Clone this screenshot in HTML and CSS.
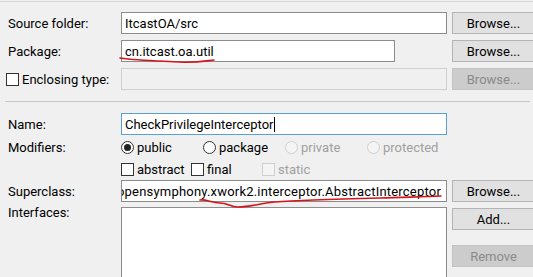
FILE: index.html
```html
<!DOCTYPE html>
<html lang="en">
<head>
    <meta charset="UTF-8">
    <meta name="viewport" content="width=device-width, initial-scale=1.0">
    <title>New Java Class</title>
    <link rel="stylesheet" href="styles.css">
</head>
<body>
    <div class="top-line"></div>
    <div class="form-grid top-section">
        <div class="label">Source folder:</div>
        <div class="field">ItcastOA/src</div>
        <div class="button">Browse...</div>

        <div class="label">Package:</div>
        <div class="field field-short">cn.itcast.oa.util</div>
        <div class="button">Browse...</div>

        <div class="label check-label"><span class="box"></span>Enclosing type:</div>
        <div class="field field-disabled"></div>
        <div class="button button-disabled">Browse...</div>
    </div>

    <div class="separator"></div>

    <div class="form-grid bottom-section">
        <div class="label">Name:</div>
        <div class="field field-focus">CheckPrivilegeInterceptor<span class="caret"></span></div>
        <div></div>

        <div class="label">Modifiers:</div>
        <div class="radio-row">
            <span class="option"><span class="radio radio-on"></span>public</span>
            <span class="option"><span class="radio"></span>package</span>
            <span class="option option-disabled"><span class="radio"></span>private</span>
            <span class="option option-disabled"><span class="radio"></span>protected</span>
        </div>
        <div></div>

        <div class="label"></div>
        <div class="check-row">
            <span class="option"><span class="box"></span>abstract</span>
            <span class="option"><span class="box"></span>final</span>
            <span class="option option-disabled"><span class="box"></span>static</span>
        </div>
        <div></div>

        <div class="label">Superclass:</div>
        <div class="field field-scrolled"><span>com.opensymphony.xwork2.interceptor.AbstractInterceptor</span></div>
        <div class="button">Browse...</div>

        <div class="label label-top">Interfaces:</div>
        <div class="list-box"></div>
        <div class="button-stack">
            <div class="button">Add...</div>
            <div class="button button-disabled">Remove</div>
        </div>
    </div>

    <!-- hand drawn red marks on the screenshot -->
    <svg class="marks" viewBox="0 0 533 277" width="533" height="277">
        <path d="M120 58 C140 61 165 61 180 62 C195 63 205 61 214 60" />
        <path d="M200 200 C206 199 212 203 220 203 C228 203 230 207 238 207 C250 207 262 203 275 202 C300 200 340 199 380 198 C405 197 425 197 441 196" />
    </svg>
</body>
</html>
```

FILE: styles.css
```css
body {
    margin: 0;
    width: 533px;
    height: 277px;
    overflow: hidden;
    position: relative;
    background-color: #f0f0f0;
    font-family: Roboto, "Noto Sans", sans-serif;
    font-size: 13px;
    color: #000;
}
.top-line {
    margin-top: 1px;
    border-top: 1px solid #d8d8d8;
}
.form-grid {
    display: grid;
    grid-template-columns: 110px 326px 83px;
    column-gap: 5px;
    padding-left: 6px;
}
.top-section {
    padding-top: 10px;
    grid-template-rows: 22px 22px 22px;
    row-gap: 6px;
}
.separator {
    margin: 11px 3px 0 5px;
    border-top: 1px solid #c8c8c8;
}
.bottom-section {
    padding-top: 11px;
    grid-template-rows: 22px 22px 20px 22px 85px;
    row-gap: 1px;
}
.label {
    display: flex;
    align-items: center;
    padding-left: 2px;
    white-space: nowrap;
}
.label-top {
    align-items: flex-start;
    padding-top: 2px;
}
.check-label {
    padding-left: 0;
}
.field {
    display: flex;
    align-items: center;
    background-color: #fff;
    border: 1px solid #8c8c8c;
    padding: 0 3px;
    white-space: nowrap;
    overflow: hidden;
}
.field-short {
    width: 266px;
}
.field-disabled {
    background-color: #f0f0f0;
    border-color: #d0d0d0;
}
.field-focus {
    border-color: #5a9fd8;
}
.field-scrolled {
    justify-content: flex-end;
    padding-right: 5px;
    letter-spacing: 0.2px;
}
.caret {
    display: inline-block;
    width: 1px;
    height: 15px;
    background-color: #000;
    margin-left: 1px;
}
.button {
    display: flex;
    align-items: center;
    justify-content: center;
    height: 22px;
    box-sizing: border-box;
    background-color: #e1e1e1;
    border: 1px solid #b4b4b4;
}
.button-disabled {
    background-color: #cccccc;
    border-color: #c4c4c4;
    color: #8a8a8a;
}
.button-stack {
    display: flex;
    flex-direction: column;
    gap: 15px;
    padding-top: 5px;
}
.list-box {
    margin-top: 4px;
    background-color: #fff;
    border: 1px solid #8c8c8c;
    height: 80px;
}
.radio-row {
    display: grid;
    grid-template-columns: 82px 82px 82px 80px;
    align-items: center;
}
.check-row {
    display: grid;
    grid-template-columns: 70px 71px 70px;
    align-items: center;
}
.option {
    display: flex;
    align-items: center;
    gap: 3px;
    white-space: nowrap;
}
.option-disabled {
    color: #a0a0a0;
}
.radio {
    width: 11px;
    height: 11px;
    border: 1px solid #333;
    border-radius: 50%;
    background-color: #fff;
    position: relative;
}
.radio-on::after {
    content: "";
    position: absolute;
    left: 2px;
    top: 2px;
    width: 7px;
    height: 7px;
    border-radius: 50%;
    background-color: #222;
}
.box {
    display: inline-block;
    width: 11px;
    height: 11px;
    border: 1px solid #333;
    background-color: #fff;
    margin-right: 3px;
}
.option .box {
    margin-right: 0;
}
.option-disabled .radio,
.option-disabled .box {
    border-color: #cfcfcf;
    background-color: #f4f4f4;
}
.marks {
    position: absolute;
    left: 0;
    top: 0;
    pointer-events: none;
}
.marks path {
    fill: none;
    stroke: #d8141a;
    stroke-width: 1.6;
    stroke-linecap: round;
}
```
